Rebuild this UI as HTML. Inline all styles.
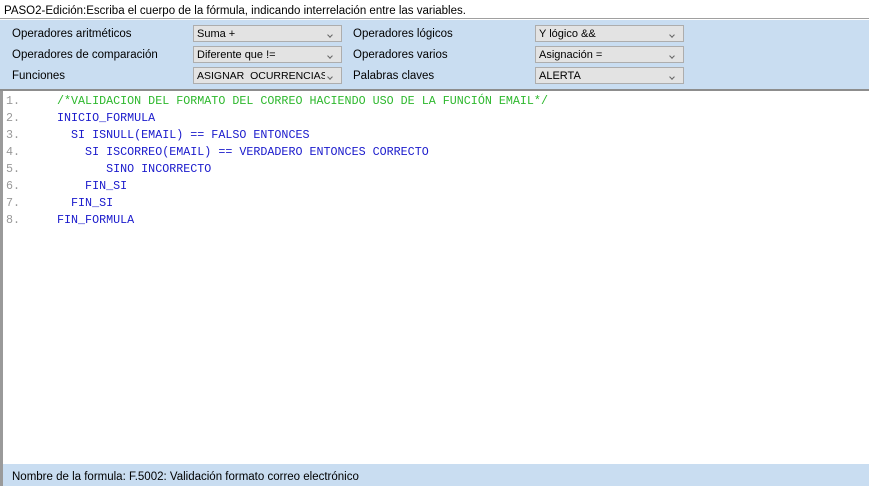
<!DOCTYPE html>
<html><head><meta charset="utf-8"><style>
body{margin:0;width:869px;height:486px;overflow:hidden;background:#fff;font-family:"Liberation Sans",sans-serif;font-size:11.5px;color:#000;position:relative}
.t{position:absolute;left:0;top:0;width:869px;height:19px;border-bottom:1px solid #a0a0a0;line-height:22px;padding-left:4px;box-sizing:border-box}
.p{position:absolute;left:0;top:20px;width:869px;height:69px;background:#c9ddf1;border-bottom:2px solid #8d8d8d}
.l{position:absolute;line-height:14px;white-space:nowrap}
.d{position:absolute;width:149px;height:17px;background:#e3e3e3;border:1px solid #adadad;box-sizing:border-box;line-height:17px;font-size:11px}
.d span{position:absolute;left:3px;top:0;right:18px;white-space:nowrap;overflow:hidden}
.d i{position:absolute;right:9px;top:7px;width:3px;height:3px;border-right:1px solid #666;border-bottom:1px solid #666;transform:rotate(45deg)}
.e{position:absolute;left:0;top:91px;width:869px;height:373px;border-left:3px solid #9a9a9a;box-sizing:border-box}
.c{position:absolute;font-family:"Liberation Mono",monospace;font-size:11.7px;line-height:17px;white-space:pre}
.n{color:#999;left:3px}
.k{color:#1a1acc;left:54px}
.s{position:absolute;left:0;top:464px;width:869px;height:22px;background:#c9ddf1;border-left:3px solid #9a9a9a;box-sizing:border-box;line-height:26px;padding-left:9px}
</style></head><body>
<div class="t">PASO2-Edición:Escriba el cuerpo de la fórmula, indicando interrelación entre las variables.</div>
<div class="p">
<div class="l" style="left:12px;top:7px">Operadores aritméticos</div>
<div class="l" style="left:12px;top:28px">Operadores de comparación</div>
<div class="l" style="left:12px;top:49px">Funciones</div>
<div class="d" style="left:193px;top:5px"><span>Suma +</span><i></i></div>
<div class="d" style="left:193px;top:26px"><span>Diferente que !=</span><i></i></div>
<div class="d" style="left:193px;top:47px"><span style="font-size:10.5px;right:16px">ASIGNAR&nbsp; OCURRENCIAS</span><i></i></div>
<div class="l" style="left:353px;top:7px">Operadores lógicos</div>
<div class="l" style="left:353px;top:28px">Operadores varios</div>
<div class="l" style="left:353px;top:49px">Palabras claves</div>
<div class="d" style="left:535px;top:5px"><span>Y lógico &amp;&amp;</span><i></i></div>
<div class="d" style="left:535px;top:26px"><span>Asignación =</span><i></i></div>
<div class="d" style="left:535px;top:47px"><span>ALERTA</span><i></i></div>
</div>
<div class="e">
<div class="c n" style="top:2px">1.
2.
3.
4.
5.
6.
7.
8.</div>
<div class="c k" style="top:2px"><span style="color:#2db82d">/*VALIDACION DEL FORMATO DEL CORREO HACIENDO USO DE LA FUNCIÓN EMAIL*/</span>
INICIO_FORMULA
  SI ISNULL(EMAIL) == FALSO ENTONCES
    SI ISCORREO(EMAIL) == VERDADERO ENTONCES CORRECTO
       SINO INCORRECTO
    FIN_SI
  FIN_SI
FIN_FORMULA</div>
</div>
<div class="s">Nombre de la formula: F.5002: Validación formato correo electrónico</div>
</body></html>
